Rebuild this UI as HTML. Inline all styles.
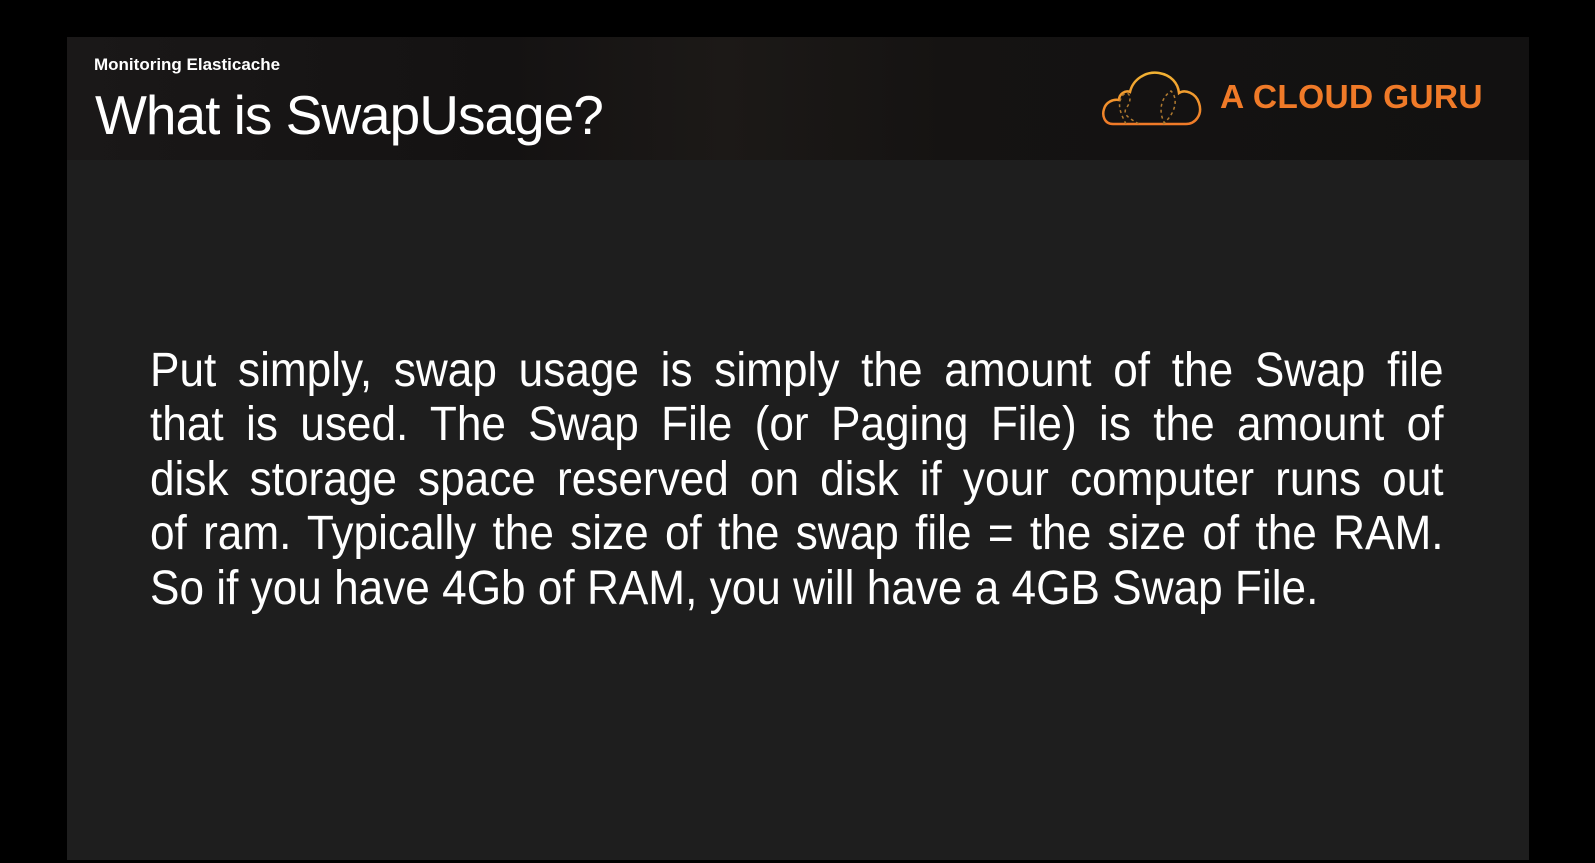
<!DOCTYPE html>
<html><head><style>
html,body{margin:0;padding:0;background:#000;width:1595px;height:863px;overflow:hidden;font-family:"Liberation Sans",sans-serif}
.slide{position:absolute;left:67px;top:37px;width:1462px;height:823px;background:#1e1e1e}
.hdr{position:absolute;left:0;top:0;width:1462px;height:123px;background:linear-gradient(90deg,#1a1818 0%,#141212 30%,#1c1917 45%,#151312 60%,#121111 100%)}
.sub{position:absolute;left:27px;top:18px;color:#fff;font-size:17px;font-weight:bold}
.title{position:absolute;left:28px;top:46px;color:#fff;font-size:55px;letter-spacing:-1px}
.logo{position:absolute;left:1153px;top:42px;color:#f07a28;font-size:33.5px;font-weight:bold;letter-spacing:0.3px}
.body{position:absolute;left:83px;top:307px;width:1406px;color:#fff;font-size:48px;line-height:54.4px;transform:scaleX(0.92);transform-origin:0 0}
.body div{white-space:nowrap;text-align:justify;text-align-last:justify}
.body div.l{text-align-last:left}
</style></head><body>
<div class="slide">
<div class="hdr"></div>
<div class="sub">Monitoring Elasticache</div>
<div class="title">What is SwapUsage?</div>
<svg style="position:absolute;left:1034px;top:31px" width="104" height="62" viewBox="0 0 104 60">
<defs><linearGradient id="g" x1="0" y1="0" x2="0" y2="1"><stop offset="0" stop-color="#f2b233"/><stop offset="1" stop-color="#f07a28"/></linearGradient></defs>
<path d="M12 55 C3 55 1 46 3 40 C5 33 12 30 18 31 C18 25 24 21 29 23 C32 10 45 2 58 4 C70 6 77 14 78 24 C84 20 95 24 98 34 C102 46 94 55 85 55 Z" fill="none" stroke="url(#g)" stroke-width="2.5"/>
<path d="M25 55 C20 45 15 35 22 26 C28 20 32 30 26 38 C20 46 30 50 38 55 M64 55 C58 45 58 30 70 22 C78 30 74 45 62 55" fill="none" stroke="#b07a30" stroke-width="1.5" stroke-dasharray="3 3"/>
</svg>
<div class="logo">A CLOUD GURU</div>
<div class="body">
<div>Put simply, swap usage is simply the amount of the Swap file</div>
<div>that is used. The Swap File (or Paging File) is the amount of</div>
<div>disk storage space reserved on disk if your computer runs out</div>
<div>of ram. Typically the size of the swap file = the size of the RAM.</div>
<div class="l">So if you have 4Gb of RAM, you will have a 4GB Swap File.</div>
</div>
</div>
</body></html>
